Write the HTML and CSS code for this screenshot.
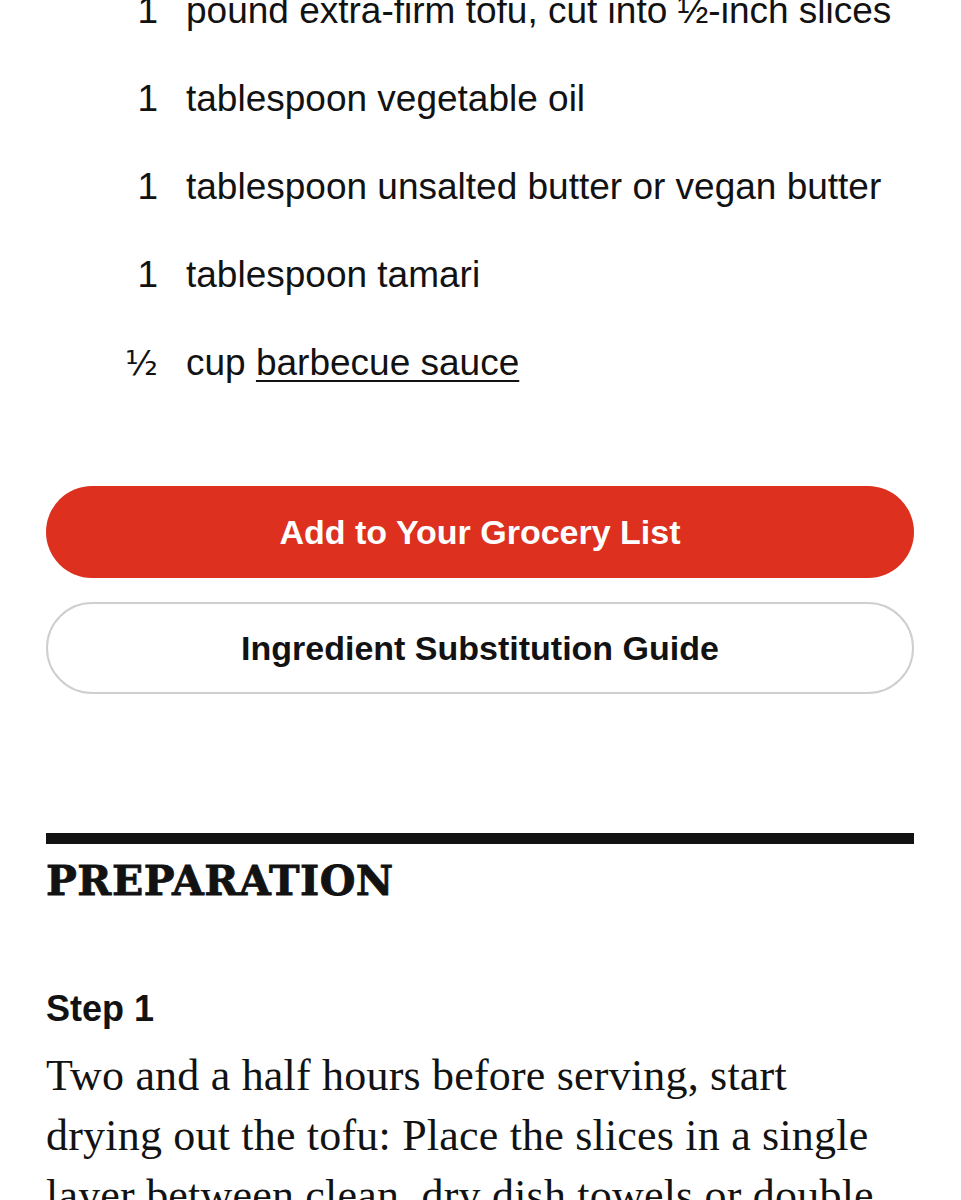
FILE: index.html
```html
<!DOCTYPE html>
<html lang="en">
<head>
  <meta charset="UTF-8" />
  <meta name="viewport" content="width=device-width, initial-scale=1.0"/>
  <title>Barbecue Tofu</title>
  <link rel="stylesheet" href="styles.css">
</head>
<body>
  <div class="recipe">
    <ul class="ingredients">
      <li><span class="qty">1</span><span class="name">pound extra-firm tofu, cut into ½-inch slices</span></li>
      <li><span class="qty">1</span><span class="name">tablespoon vegetable oil</span></li>
      <li><span class="qty">1</span><span class="name">tablespoon unsalted butter or vegan butter</span></li>
      <li><span class="qty">1</span><span class="name">tablespoon tamari</span></li>
      <li><span class="qty frac">½</span><span class="name">cup <a href="#">barbecue sauce</a></span></li>
    </ul>

    <div class="actions">
      <button type="button" class="grocery-btn">Add to Your Grocery List</button>
      <button type="button" class="guide-btn">Ingredient Substitution Guide</button>
    </div>

    <section class="preparation">
      <h2>Preparation</h2>
      <div class="step">
        <h3>Step 1</h3>
        <p>Two and a half hours before serving, start drying out the tofu: Place the slices in a single layer between clean, dry dish towels or double layers of paper towels.</p>
      </div>
    </section>
  </div>
</body>
</html>
```

FILE: styles.css
```css
body {
  margin: 0;
  background-color: #fff;
  color: #121212;
  font-family: "Liberation Sans", Arial, sans-serif;
  overflow: hidden;
}

.recipe {
  padding: 0 47px 0 46px;
}

.ingredients {
  list-style: none;
  margin: -33px 0 0 0;
  padding: 0;
}

.ingredients li {
  display: flex;
  font-size: 37px;
  line-height: 88px;
  white-space: nowrap;
}

.qty {
  width: 112px;
  text-align: right;
  flex-shrink: 0;
}

.qty.frac {
  font-family: "DejaVu Sans", sans-serif;
  font-size: 34px;
}

.name {
  margin-left: 28px;
}

.name a {
  color: inherit;
  text-decoration: underline;
  text-decoration-thickness: 2px;
  text-underline-offset: 5px;
}

.actions {
  display: flex;
  flex-direction: column;
  gap: 24px;
  margin-top: 79px;
}

.actions button {
  height: 92px;
  border-radius: 46px;
  font-family: "Liberation Sans", Arial, sans-serif;
  font-size: 34px;
  font-weight: 700;
  cursor: pointer;
}

.grocery-btn {
  background-color: #dd301f;
  color: #fff;
  border: none;
}

.guide-btn {
  background-color: #fff;
  color: #121212;
  border: 2px solid #cfcfcf;
}

.preparation {
  margin-top: 139px;
  border-top: 11px solid #121212;
}

.preparation h2 {
  margin: 16px 0 0;
  font-family: "DejaVu Serif", serif;
  font-size: 41px;
  font-weight: 700;
  line-height: 42px;
  text-transform: uppercase;
  letter-spacing: 0.5px;
  -webkit-text-stroke: 0.8px #121212;
}

.step h3 {
  margin: 86px 0 0;
  font-size: 36px;
  font-weight: 700;
  line-height: 42px;
}

.step p {
  margin: 16px 0 0;
  font-family: "Liberation Serif", "Times New Roman", serif;
  font-size: 44px;
  line-height: 60px;
  letter-spacing: 0.2px;
}
```
